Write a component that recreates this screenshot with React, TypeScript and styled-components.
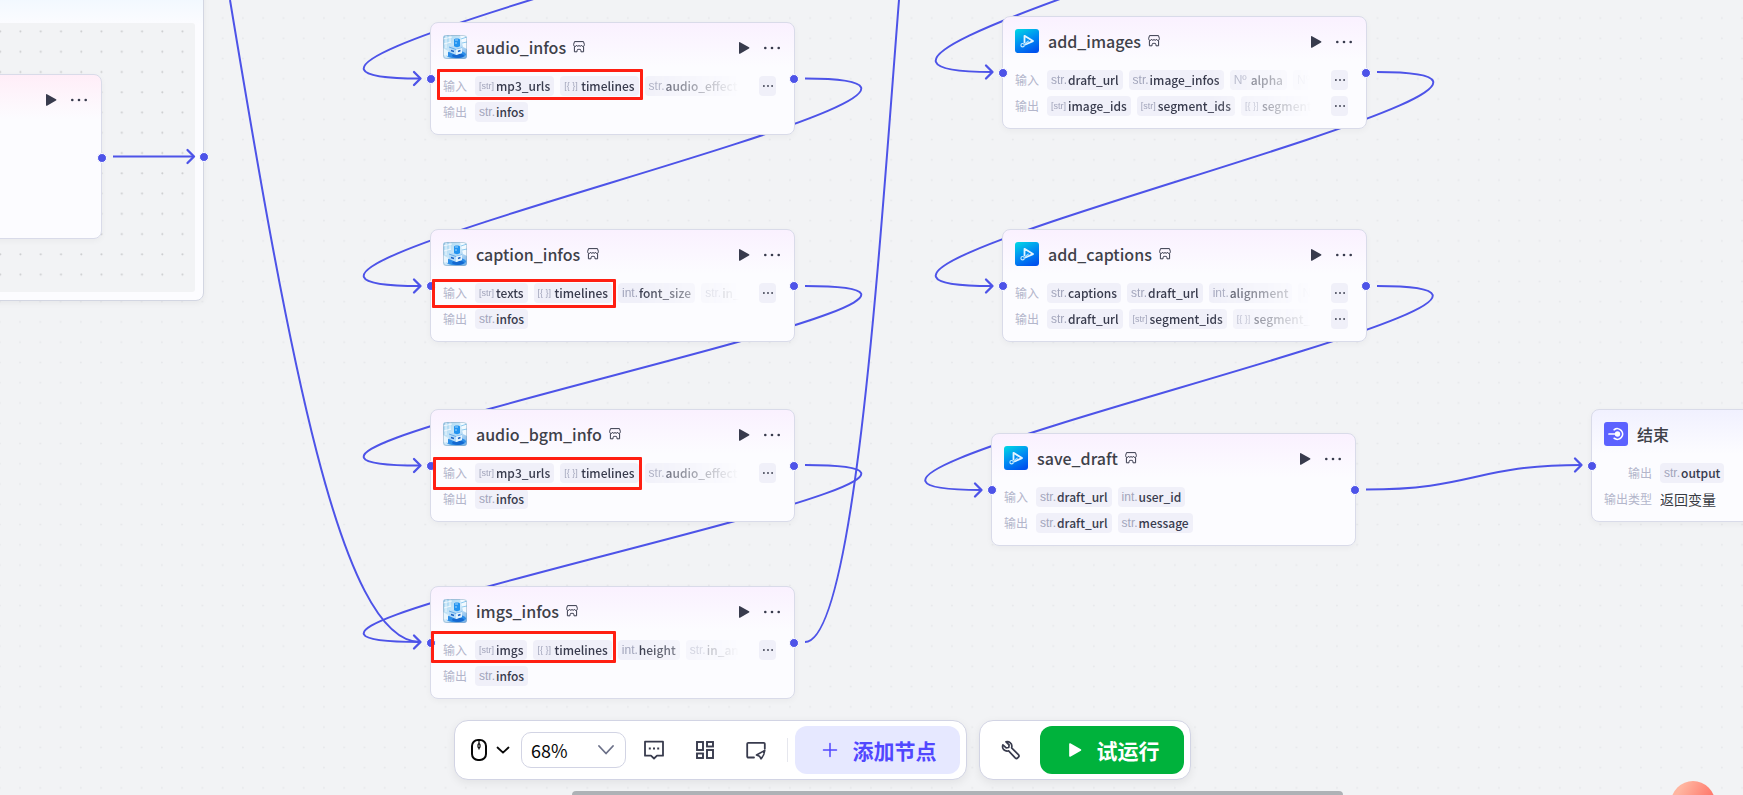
import React from 'react';
import styled, { createGlobalStyle } from 'styled-components';

const GlobalStyle = createGlobalStyle`
  * { box-sizing: border-box; }
  body {
    margin: 0;
    background: #f2f3f5;
    color: #383b4d;
    font-family: "Noto Sans CJK SC", "Noto Sans", sans-serif;
  }
  button, select { font-family: inherit; }
`;

const ACCENT = '#4d53e8';

type ParamType = 'str' | 'int' | 'num' | 'arr' | 'obj';
type Param = [ParamType, string];
interface FlowNode {
  x: number;
  y: number;
  title: string;
  icon: 'photo' | 'draft';
  inputs: Param[];
  outputs: Param[];
}
interface Mark { x: number; y: number; w: number; h: number }

const TYPE_TEXT: Record<ParamType, string> = {
  str: 'str.', int: 'int.', num: 'Nº', arr: '[str]', obj: '[{ }]',
};

const nodes: FlowNode[] = [
  {
    x: 430, y: 22, title: 'audio_infos', icon: 'photo',
    inputs: [['arr', 'mp3_urls'], ['obj', 'timelines'], ['str', 'audio_effect']],
    outputs: [['str', 'infos']],
  },
  {
    x: 430, y: 229, title: 'caption_infos', icon: 'photo',
    inputs: [['arr', 'texts'], ['obj', 'timelines'], ['int', 'font_size'], ['str', 'in_']],
    outputs: [['str', 'infos']],
  },
  {
    x: 430, y: 409, title: 'audio_bgm_info', icon: 'photo',
    inputs: [['arr', 'mp3_urls'], ['obj', 'timelines'], ['str', 'audio_effect']],
    outputs: [['str', 'infos']],
  },
  {
    x: 430, y: 586, title: 'imgs_infos', icon: 'photo',
    inputs: [['arr', 'imgs'], ['obj', 'timelines'], ['int', 'height'], ['str', 'in_ani']],
    outputs: [['str', 'infos']],
  },
  {
    x: 1002, y: 16, title: 'add_images', icon: 'draft',
    inputs: [['str', 'draft_url'], ['str', 'image_infos'], ['num', 'alpha'], ['num', '']],
    outputs: [['arr', 'image_ids'], ['arr', 'segment_ids'], ['obj', 'segment']],
  },
  {
    x: 1002, y: 229, title: 'add_captions', icon: 'draft',
    inputs: [['str', 'captions'], ['str', 'draft_url'], ['int', 'alignment'], ['num', '']],
    outputs: [['str', 'draft_url'], ['arr', 'segment_ids'], ['obj', 'segment_']],
  },
  {
    x: 991, y: 433, title: 'save_draft', icon: 'draft',
    inputs: [['str', 'draft_url'], ['int', 'user_id']],
    outputs: [['str', 'draft_url'], ['str', 'message']],
  },
];

const marks: Mark[] = [
  { x: 437, y: 69, w: 206, h: 31 },
  { x: 432, y: 279, w: 184, h: 29 },
  { x: 433, y: 457, w: 209, h: 33 },
  { x: 431, y: 631, w: 185, h: 32 },
];

const curve = (x1: number, y1: number, x2: number, y2: number, c = 295) =>
  `M${x1} ${y1}C${x1 + c} ${y1} ${x2 - c} ${y2} ${x2} ${y2}`;

const edges = [
  curve(805, -129, 420, 78.5),
  curve(805, 78.5, 420, 286),
  curve(805, 286, 420, 465.5),
  curve(805, 465, 420, 642),
  curve(1377, -161, 992, 72),
  curve(1377, 72, 992, 286),
  curve(1377, 286, 981, 490),
  curve(1366, 489.5, 1582, 465, 108),
  'M230 0C288 350 340 642 420 642',
  'M805 642C855 642 880 240 899 0',
  'M113 156.5H194',
];

const arrows = [
  [421, 78.5], [421, 286], [421, 465.5], [421, 642],
  [993, 72], [993, 286], [982, 490], [1582, 465], [194.5, 156.5],
];

const Canvas = styled.main`
  position: relative;
  height: 100vh;
  overflow: hidden;
  background: #f2f3f5;
`;

const Layer = styled.svg`
  position: absolute;
  inset: 0;
  width: 100%;
  height: 100%;
  pointer-events: none;
`;

const LoopPanel = styled.section`
  position: absolute;
  left: -40px;
  top: -60px;
  width: 244px;
  height: 361px;
  padding: 82px 8px 8px;
  border: 1px solid #d3d6e2;
  border-radius: 8px;
  background: linear-gradient(#dcf1ff, #fcfcff 84px);
  box-shadow: 0 2px 6px rgba(0, 0, 0, 0.05);
`;

const LoopBody = styled.div`
  position: relative;
  height: 100%;
  border-radius: 3px;
  background: #f2f3f5;
  overflow: hidden;
`;

const Card = styled.article<{ $x: number; $y: number; $h?: number; $tint?: string }>`
  position: absolute;
  left: ${p => p.$x}px;
  top: ${p => p.$y}px;
  width: 365px;
  min-height: ${p => p.$h ?? 113}px;
  padding: 12px 12px 11px;
  border: 1px solid #d9dbe9;
  border-radius: 8px;
  background: linear-gradient(${p => p.$tint ?? '#faf1ff'}, #fcfcff 44px);
  box-shadow: 0 2px 6px rgba(0, 0, 0, 0.04);
`;

const CardHead = styled.header`
  display: flex;
  align-items: center;
  height: 24px;
  margin-bottom: 17px;
`;

const Title = styled.h2`
  margin: 0 7px 0 9px;
  font-size: 16px;
  line-height: 24px;
  font-weight: 500;
  color: #3e4149;
`;

const HeadActions = styled.div`
  display: flex;
  align-items: center;
  gap: 14px;
  margin: 2px 2px 0 auto;
`;

const PlainButton = styled.button`
  display: flex;
  padding: 0;
  border: 0;
  background: none;
  color: #383b4d;
`;

const Rows = styled.div`
  display: grid;
  grid-template-columns: minmax(0, 1fr);
  gap: 6px;
`;

const Row = styled.div`
  display: flex;
  align-items: center;
  gap: 8px;
  height: 20px;
`;

const RowLabel = styled.span<{ $wide?: boolean }>`
  flex: none;
  width: ${p => (p.$wide ? 48 : 24)}px;
  font-size: 12px;
  line-height: 20px;
  text-align: right;
  color: #b3b6cb;
`;

const Chips = styled.div<{ $fade?: boolean }>`
  display: flex;
  flex: 1;
  gap: 6px;
  min-width: 0;
  margin-right: ${p => (p.$fade ? 12 : 0)}px;
  overflow: hidden;
  ${p => p.$fade && 'mask-image: linear-gradient(90deg, #000 62%, transparent);'}
`;

const Chip = styled.span`
  display: flex;
  flex: none;
  align-items: center;
  gap: 2px;
  height: 20px;
  padding: 0 4px;
  border-radius: 4px;
  background: #f0f0f9;
  font-size: 12px;
  line-height: 20px;
  font-weight: 500;
  color: #383b4d;
`;

const TypeTag = styled.span<{ $small: boolean }>`
  width: 15px;
  font-family: "Liberation Sans Narrow", "Liberation Sans", sans-serif;
  font-size: ${p => (p.$small ? 9 : 12)}px;
  line-height: 18px;
  font-weight: 400;
  white-space: nowrap;
  color: #a2a5bb;
`;

const MoreChip = styled.button`
  display: grid;
  flex: none;
  place-items: center;
  width: 17px;
  height: 20px;
  margin-right: 6px;
  padding: 0;
  border: 0;
  border-radius: 4px;
  background: #f0f0f9;
  color: #383b4d;
`;

const ReturnValue = styled.span`
  font-size: 14px;
  line-height: 20px;
  color: #383b43;
`;

const Port = styled.i<{ $side: 'left' | 'right' }>`
  position: absolute;
  top: 51px;
  ${p => p.$side}: -5px;
  width: 10px;
  height: 10px;
  border: 1px solid #fff;
  border-radius: 50%;
  background: ${ACCENT};
`;

const PanelPort = styled(Port)`
  top: 211px;
  right: -6px;
`;

const LowPort = styled(Port)`
  top: 78px;
  right: -6px;
`;

const Highlight = styled.div<{ $m: Mark }>`
  position: absolute;
  left: ${p => p.$m.x}px;
  top: ${p => p.$m.y}px;
  width: ${p => p.$m.w}px;
  height: ${p => p.$m.h}px;
  border: 3px solid #ff1f12;
  border-radius: 1px;
  pointer-events: none;
`;

const Dock = styled.footer`
  position: absolute;
  left: 0;
  right: 98px;
  bottom: 15px;
  display: flex;
  justify-content: center;
  gap: 12px;
`;

const Bar = styled.div`
  display: flex;
  align-items: center;
  height: 60px;
  padding: 0 6px;
  border: 1px solid #d2d4e4;
  border-radius: 14px;
  background: #fff;
  box-shadow: 0 3px 10px rgba(0, 0, 0, 0.07);
`;

const PointerButton = styled(PlainButton)`
  align-items: center;
  gap: 9px;
  margin: 0 11px 0 10px;
  color: #080808;
`;

const ZoomField = styled.label`
  position: relative;
  display: flex;
  align-items: center;
  width: 105px;
  height: 36px;
`;

const ZoomSelect = styled.select`
  appearance: none;
  width: 100%;
  height: 100%;
  padding: 0 32px 0 9px;
  border: 1px solid #d2d4e4;
  border-radius: 10px;
  background: #fff;
  color: #080808;
  font-size: 18px;
  line-height: 26px;
`;

const SelectArrow = styled.svg`
  position: absolute;
  right: 12px;
  pointer-events: none;
`;

const ToolButton = styled(PlainButton)`
  align-items: center;
  justify-content: center;
  width: 51px;
  height: 48px;
`;

const Tools = styled.div`
  display: flex;
  margin: 0 6px 0 2px;
`;

const Divider = styled.span`
  width: 1px;
  height: 24px;
  margin-right: 7px;
  background: #e6e7ee;
`;

const ActionButton = styled.button<{ $primary?: boolean }>`
  display: flex;
  align-items: center;
  justify-content: center;
  gap: 15px;
  width: ${p => (p.$primary ? 144 : 165)}px;
  height: 48px;
  padding: 0 0 0 3px;
  border: 0;
  border-radius: 12px;
  background: ${p => (p.$primary ? '#00b23c' : '#e6e8ff')};
  color: ${p => (p.$primary ? '#fff' : '#5147ff')};
  font-size: 21px;
  line-height: 30px;
  font-weight: 700;
`;

const WrenchButton = styled(ToolButton)`
  width: 50px;
  margin-right: 4px;
`;

const ScrollThumb = styled.div`
  position: absolute;
  left: 572px;
  right: 400px;
  bottom: -4px;
  height: 8px;
  border-radius: 4px;
  background: #aeb2b6;
`;

const Orb = styled.button`
  position: absolute;
  right: 28px;
  bottom: -30px;
  width: 44px;
  height: 44px;
  padding: 0;
  border: 0;
  border-radius: 50%;
  background: linear-gradient(120deg, #ffb5a0 20%, #ff7468 75%);
`;

const PhotoIcon = () => (
  <svg width="24" height="24" viewBox="0 0 24 24">
    <defs>
      <linearGradient id="photo-bg" x1="0" y1="0" x2="1" y2="1">
        <stop offset="0" stopColor="#9fd2f0" />
        <stop offset="0.5" stopColor="#cfe9f9" />
        <stop offset="1" stopColor="#6fade8" />
      </linearGradient>
      <clipPath id="photo-clip"><rect width="24" height="24" rx="3" /></clipPath>
    </defs>
    <g clipPath="url(#photo-clip)">
      <rect width="24" height="24" fill="url(#photo-bg)" />
      <path d="M0 4L9 2M1 9l7-2M3 0v13M7 0v8" stroke="#fff" strokeWidth="1" opacity=".8" />
      <path d="M17 0h7v14l-4-2z" fill="#f2faff" />
      <path d="M18 4l6-2M19 8l5-1" stroke="#8ccaf0" strokeWidth="1" />
      <ellipse cx="13" cy="19.500" rx="10" ry="3.800" fill="#2c8de8" />
      <ellipse cx="15" cy="20.800" rx="6" ry="2.200" fill="#1468d0" />
      <path d="M6 12l7-2 6 3v5l-6 2-7-3z" fill="#b4dbf8" />
      <path d="M6 12l7 2.500 6-1.500" stroke="#4f9fe4" strokeWidth=".8" fill="none" />
      <path d="M13 14.500l6-1.500v5l-6 2z" fill="#e3f3fe" />
      <path d="M8 15.500l3 1M15 16.500l2.500-1" stroke="#1a62c4" strokeWidth="1.400" />
      <path d="M11 4.500c0-1.500 6-1.500 6 0v6.500c-1 1.500-5 1.500-6 0z" fill="#2394f0" />
      <path d="M12 5h3M12 8h2" stroke="#9fd6ff" strokeWidth="1" />
      <path d="M0 13l5 3v5l-5-1z" fill="#e9f6fd" />
    </g>
    <rect x=".5" y=".5" width="23" height="23" rx="3" fill="none" stroke="#7f9bb8" strokeOpacity=".45" />
  </svg>
);

const DraftIcon = () => (
  <svg width="24" height="24" viewBox="0 0 24 24">
    <defs>
      <linearGradient id="draft-bg" x1="0.2" y1="0" x2="0.7" y2="1">
        <stop offset="0" stopColor="#00d0e6" />
        <stop offset="0.500" stopColor="#008cf2" />
        <stop offset="1" stopColor="#0052ee" />
      </linearGradient>
    </defs>
    <rect width="24" height="24" rx="3" fill="url(#draft-bg)" />
    <path d="M9.500 14V6.800L18 12.100l-8.200 3.700" fill="none" stroke="#e4f5ff" strokeWidth="1.800" strokeLinejoin="round" />
    <path d="M9.600 15.200l4-3.400" stroke="#9fdcff" strokeWidth="1.200" />
    <circle cx="7.600" cy="16.200" r="1.700" fill="none" stroke="#c8ecff" strokeWidth="1.100" />
  </svg>
);

const EndIcon = () => (
  <svg width="24" height="24" viewBox="0 0 24 24" fill="none" stroke="#fff">
    <rect width="24" height="24" rx="3" fill="#5c62ff" stroke="none" />
    <path d="M10.200 7.700A5.300 5.300 0 1 1 10.200 16.300" strokeWidth="1.700" strokeLinecap="round" />
    <circle cx="13.500" cy="12" r="2.700" fill="#fff" stroke="none" />
    <path d="M5 12h8" strokeWidth="1.700" strokeLinecap="round" />
  </svg>
);

const ShopIcon = () => (
  <svg width="12" height="12" viewBox="0 0 12 12" fill="none" stroke="#383b4d" strokeWidth="1" strokeLinejoin="round">
    <path d="M1.500.6h9l.9 3c0 1.200-.6 1.800-1.500 1.800-.8 0-1.300-.4-1.600-1.100" />
    <path d="M1.500.6L.6 3.600c0 1.200.6 1.800 1.500 1.800.8 0 1.300-.4 1.600-1.100.5 1.400 1.800 1.500 2.300 0 .5 1.500 1.800 1.400 2.300 0" />
    <path d="M1.400 5.500v5.300h2.600l.2-1.600c.4-1.400 1.300-1.400 1.800-.2.500-1.200 1.400-1.200 1.800.2l.2 1.600h2.600V5.500" />
  </svg>
);

const RunIcon = ({ size = 12 }: { size?: number }) => (
  <svg width={size} height={size} viewBox="0 0 12 12" fill="currentColor">
    <path d="M1 .7C1 .2 1.500 0 2 .2l9 5.100c.5.300.5 1 0 1.300l-9 5.100c-.5.300-1 0-1-.5z" />
  </svg>
);

const DotsIcon = ({ size = 16, r = 1.3 }: { size?: number; r?: number }) => (
  <svg width={size} height="4" viewBox={`0 0 ${size} 4`} fill="currentColor">
    <circle cx={r} cy="2" r={r} />
    <circle cx={size / 2} cy="2" r={r} />
    <circle cx={size - r} cy="2" r={r} />
  </svg>
);

const ParamRow = ({ label, params }: { label: string; params: Param[] }) => {
  const overflows = params.length > 2;
  return (
    <Row>
      <RowLabel>{label}</RowLabel>
      <Chips $fade={overflows}>
        {params.map(([type, name]) => (
          <Chip key={name}>
            <TypeTag $small={type === 'arr' || type === 'obj'}>{TYPE_TEXT[type]}</TypeTag>
            {name}
          </Chip>
        ))}
      </Chips>
      {overflows && (
        <MoreChip aria-label="更多"><DotsIcon size={10} r={0.9} /></MoreChip>
      )}
    </Row>
  );
};

const NodeActions = () => (
  <HeadActions>
    <PlainButton aria-label="运行"><RunIcon /></PlainButton>
    <PlainButton aria-label="更多操作"><DotsIcon /></PlainButton>
  </HeadActions>
);

const NodeCard = ({ node }: { node: FlowNode }) => (
  <Card $x={node.x} $y={node.y}>
    <CardHead>
      {node.icon === 'photo' ? <PhotoIcon /> : <DraftIcon />}
      <Title>{node.title}</Title>
      <ShopIcon />
      <NodeActions />
    </CardHead>
    <Rows>
      <ParamRow label="输入" params={node.inputs} />
      <ParamRow label="输出" params={node.outputs} />
    </Rows>
    <Port $side="left" />
    <Port $side="right" />
  </Card>
);

export default function App() {
  return (
    <>
      <GlobalStyle />
      <Canvas>
        <Layer>
          <defs>
            <pattern id="grid" x="9.500" y="7.900" width="20.260" height="20.260" patternUnits="userSpaceOnUse">
              <circle cx="10.500" cy="10.100" r="1" fill="#e7e8eb" />
            </pattern>
          </defs>
          <rect width="100%" height="100%" fill="url(#grid)" />
        </Layer>

        <LoopPanel>
          <LoopBody>
            <Layer>
              <defs>
                <pattern id="loop-grid" x="41.500" y="-1.500" width="20.260" height="20.260" patternUnits="userSpaceOnUse">
                  <circle cx="10" cy="10" r="1" fill="#cbccce" />
                </pattern>
              </defs>
              <rect width="100%" height="100%" fill="url(#loop-grid)" />
            </Layer>
          </LoopBody>
          <PanelPort $side="right" />
        </LoopPanel>
        <Card $x={-263} $y={74} $h={165} $tint="#ffeef8">
          <CardHead><NodeActions /></CardHead>
          <LowPort $side="right" />
        </Card>

        <Layer fill="none" stroke={ACCENT} strokeWidth="2">
          {edges.map(d => <path key={d} d={d} />)}
        </Layer>

        {nodes.map(n => <NodeCard key={n.title} node={n} />)}

        <Card $x={1591} $y={409} $tint="#f1f1ff">
          <CardHead>
            <EndIcon />
            <Title>结束</Title>
          </CardHead>
          <Rows>
            <Row>
              <RowLabel $wide>输出</RowLabel>
              <Chip><TypeTag $small={false}>str.</TypeTag>output</Chip>
            </Row>
            <Row>
              <RowLabel $wide>输出类型</RowLabel>
              <ReturnValue>返回变量</ReturnValue>
            </Row>
          </Rows>
          <Port $side="left" />
        </Card>

        <Layer fill="none" stroke={ACCENT} strokeWidth="2.300" strokeLinecap="round" strokeLinejoin="round">
          {arrows.map(([x, y]) => (
            <path key={`${x}-${y}`} d={`M${x - 7} ${y - 6.5}L${x - 0.5} ${y}L${x - 7} ${y + 6.5}`} />
          ))}
        </Layer>

        {marks.map(m => <Highlight key={m.y} $m={m} />)}

        <ScrollThumb />

        <Dock>
          <Bar>
            <PointerButton aria-label="交互模式">
              <svg width="16" height="22" viewBox="0 0 16 22" fill="none" stroke="currentColor">
                <rect x="1" y="1" width="14" height="20" rx="6" strokeWidth="2" />
                <path d="M8 2v3M8 9v1.500" strokeWidth="1.200" />
                <rect x="7" y="4.800" width="2" height="4" rx="1" strokeWidth="1.200" />
              </svg>
              <svg width="14" height="14" viewBox="0 0 14 14" fill="none" stroke="currentColor" strokeWidth="1.800" strokeLinecap="round" strokeLinejoin="round">
                <path d="M1.500 4.500L7 9.700l5.500-5.200" />
              </svg>
            </PointerButton>
            <ZoomField>
              <ZoomSelect aria-label="缩放" defaultValue="68"><option value="68">68%</option></ZoomSelect>
              <SelectArrow width="16" height="10" viewBox="0 0 16 10" fill="none" stroke="#6b7088" strokeWidth="1.800" strokeLinecap="round" strokeLinejoin="round">
                <path d="M1 1l7 7.500L15 1" />
              </SelectArrow>
            </ZoomField>
            <Tools>
              <ToolButton aria-label="注释">
                <svg width="20" height="20" viewBox="0 0 20 20" fill="none" stroke="currentColor" strokeWidth="1.800" strokeLinejoin="round">
                  <path d="M1 1.700h18v14h-6L10 18.500 7 15.700H1z" />
                  <path d="M4.800 8.500h2M9 8.500h2M13.200 8.500h2" strokeWidth="2" />
                </svg>
              </ToolButton>
              <ToolButton aria-label="优化布局">
                <svg width="20" height="20" viewBox="0 0 20 20" fill="none" stroke="currentColor" strokeWidth="1.900">
                  <rect x="2" y="2" width="6" height="8" />
                  <rect x="12" y="2" width="6" height="4.500" />
                  <rect x="2" y="13.500" width="6" height="4.500" />
                  <rect x="12" y="10" width="6" height="8" />
                </svg>
              </ToolButton>
              <ToolButton aria-label="缩略图">
                <svg width="20" height="20" viewBox="0 0 20 20" fill="none" stroke="currentColor" strokeWidth="1.800" strokeLinejoin="round" strokeLinecap="round">
                  <path d="M8 17.500H2.300c-.6 0-1.100-.4-1.100-1V3.800c0-.6.500-1 1.100-1h15.500c.6 0 1 .4 1 1v5" />
                  <path d="M18.800 10.500l-8.300 4.500 3 1.200 1.500 2.600c1.600-1.500 3.300-4.500 3.800-8.300z" strokeWidth="1.600" />
                </svg>
              </ToolButton>
            </Tools>
            <Divider />
            <ActionButton>
              <svg width="16" height="16" viewBox="0 0 16 16" stroke="currentColor" strokeWidth="1.500" strokeLinecap="round">
                <path d="M8 1.500v13M1.500 8h13" />
              </svg>
              添加节点
            </ActionButton>
          </Bar>
          <Bar>
            <WrenchButton aria-label="调试">
              <svg width="20" height="20" viewBox="0 0 20 20" fill="none" stroke="currentColor" strokeWidth="1.700" strokeLinejoin="round" strokeLinecap="round">
                <path d="M5 1.800l3.100 3.100-.3 2.600-2.600.3L1.900 4.800C1 7 2 9.500 4 10.500c1.200.6 2.400.7 3.600.3l6.600 7c.7.7 1.800.8 2.500.1l.7-.7c.7-.7.7-1.800 0-2.500l-6.800-6.900c.6-2 0-4-1.500-5.200C7.900 1.600 6.400 1.300 5 1.800z" />
              </svg>
            </WrenchButton>
            <ActionButton $primary>
              <RunIcon size={14} />
              试运行
            </ActionButton>
          </Bar>
        </Dock>

        <Orb aria-label="助手" />
      </Canvas>
    </>
  );
}
